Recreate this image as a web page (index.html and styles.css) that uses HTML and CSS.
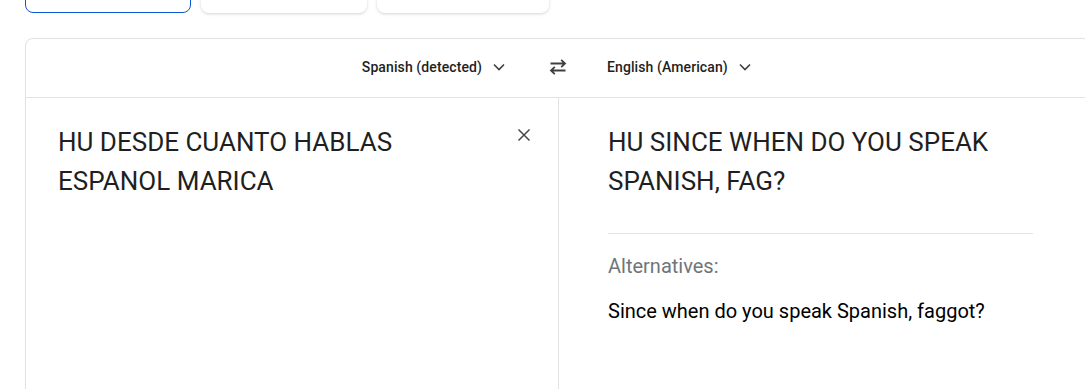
FILE: index.html
```html
<!DOCTYPE html>
<html lang="en">
<head>
<meta charset="utf-8">
<title>Translate</title>
<link rel="stylesheet" href="styles.css">
</head>
<body>
<div class="page">
  <nav class="modes">
    <button class="mode mode-active"><span class="mode-sub">133 languages</span></button>
    <button class="mode"><span class="mode-sub">.pdf, .docx, .pptx, .xlsx</span></button>
    <button class="mode mode-wide"><span class="mode-sub">Translate a web<span class="ghost">p</span>age</span></button>
  </nav>

  <section class="card">
    <header class="lang-bar">
      <button class="lang lang-source">
        <span>Spanish (detected)</span>
        <svg class="chev" viewBox="0 0 12 8" width="12" height="8"><path d="M1 1.5l5 5 5-5" fill="none" stroke="#3c4043" stroke-width="1.6"/></svg>
      </button>
      <button class="swap" aria-label="Swap languages">
        <svg viewBox="0 0 20 20" width="20" height="20"><path d="M2.5 6.5h14.5M13.2 2.8l3.8 3.7-3.8 3.7M17.5 13.5H3M6.8 9.8L3 13.5l3.8 3.7" fill="none" stroke="#3c4043" stroke-width="1.8"/></svg>
      </button>
      <button class="lang lang-target">
        <span>English (American)</span>
        <svg class="chev" viewBox="0 0 12 8" width="12" height="8"><path d="M1 1.5l5 5 5-5" fill="none" stroke="#3c4043" stroke-width="1.6"/></svg>
      </button>
    </header>

    <div class="panes">
      <div class="pane pane-source">
        <p class="big-text">HU DESDE CUANTO HABLAS ESPANOL MARICA</p>
        <button class="clear" aria-label="Clear">
          <svg viewBox="0 0 14 14" width="14" height="14"><path d="M1.5 1.5l11 11M12.5 1.5l-11 11" fill="none" stroke="#444746" stroke-width="1.5"/></svg>
        </button>
      </div>
      <div class="pane pane-target">
        <p class="big-text">HU SINCE WHEN DO YOU SPEAK SPANISH, FAG?</p>
        <hr class="rule">
        <p class="alt-label">Alternatives:</p>
        <p class="alt-text">Since when do you speak Spanish, faggot?</p>
      </div>
    </div>
  </section>
</div>
</body>
</html>
```

FILE: styles.css
```css
* { box-sizing: border-box; }

html, body {
  margin: 0;
  padding: 0;
  background: #ffffff;
  overflow: hidden;
  height: 389px;
}

body {
  font-family: Roboto, "Noto Sans", Arial, sans-serif;
  color: #1f1f1f;
}

button {
  font-family: inherit;
  background: none;
  border: 0;
  padding: 0;
  margin: 0;
  cursor: pointer;
  color: inherit;
}

.page {
  width: 1100px;
  padding-left: 25px;
}

.modes {
  display: flex;
  gap: 10px;
  margin-top: -43px;
}

.mode {
  width: 166px;
  height: 56px;
  border-radius: 8px;
  background: #fff;
  box-shadow: 0 1px 3px rgba(60, 64, 67, 0.22);
  display: flex;
  flex-direction: column;
  align-items: center;
  justify-content: flex-start;
  padding-top: 20px;
  font-size: 14px;
  line-height: 20px;
  color: #444746;
}

.mode-active {
  border: 1.5px solid #0b57d0;
  box-shadow: none;
  padding-top: 19px;
}

.mode-wide { width: 172px; }

.mode-sub { color: #444746; }

.ghost { color: #4a7fd6; }

.card {
  margin-top: 25px;
  width: 1066px;
  height: 400px;
  border: 1px solid #e3e3e3;
  border-radius: 8px;
  background: #fff;
  display: flex;
  flex-direction: column;
  box-shadow: 0 0 2px rgba(0, 0, 0, 0.04);
}

.lang-bar {
  height: 59px;
  flex: none;
  display: grid;
  grid-template-columns: 1fr 48px 1fr;
  column-gap: 6px;
  align-items: center;
  padding-bottom: 2px;
  border-bottom: 1px solid #e3e3e3;
}

.lang {
  display: flex;
  align-items: center;
  gap: 11px;
  height: 40px;
  font-size: 14px;
  font-weight: 500;
  letter-spacing: 0.1px;
  color: #1f1f1f;
}

.lang-source {
  justify-self: end;
  padding-right: 23px;
}

.lang-target {
  justify-self: start;
  padding-left: 19px;
}

.chev { display: block; }

.swap {
  width: 48px;
  height: 40px;
  display: flex;
  align-items: center;
  justify-content: center;
}

.swap svg { display: block; }

.panes {
  flex: 1;
  display: grid;
  grid-template-columns: 533px 1fr;
}

.pane {
  padding-top: 25px;
}

.pane-source {
  display: flex;
  align-items: flex-start;
  justify-content: space-between;
  padding-left: 32px;
  padding-right: 27px;
  border-right: 1px solid #e3e3e3;
}

.pane-target {
  padding-left: 49px;
  padding-right: 57px;
}

.big-text {
  margin: 0;
  font-size: 26px;
  line-height: 39px;
  font-weight: 400;
  color: #1f1f1f;
  max-width: 420px;
}

.pane-target .big-text { max-width: 426px; }

.clear {
  margin-top: 5px;
  width: 14px;
  height: 14px;
}

.clear svg { display: block; }

.rule {
  margin: 32px 0 0;
  border: 0;
  border-top: 1px solid #e3e3e3;
}

.alt-label {
  margin: 18px 0 0;
  font-size: 20px;
  line-height: 28px;
  color: #70757a;
}

.alt-text {
  margin: 17px 0 0;
  font-size: 20px;
  line-height: 28px;
  color: #000;
}
```
